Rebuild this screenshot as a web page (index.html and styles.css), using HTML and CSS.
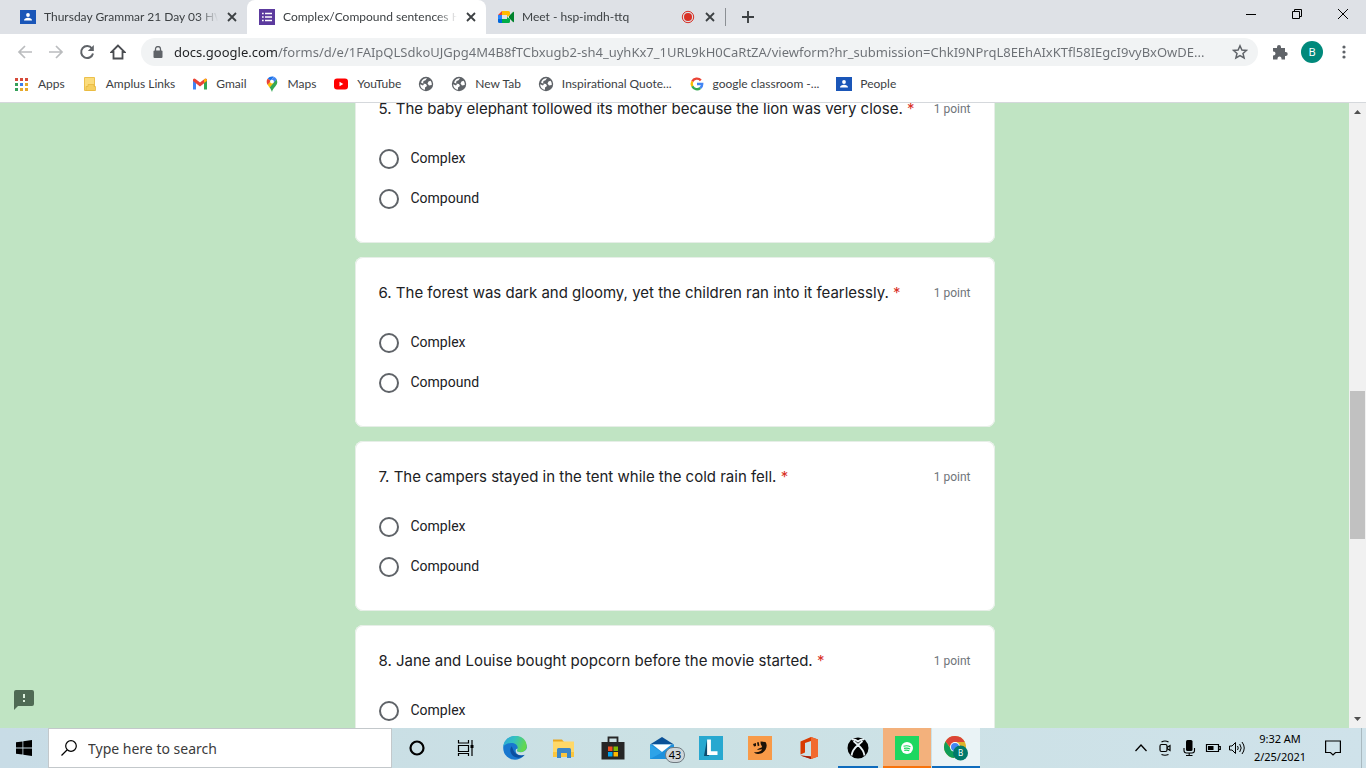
FILE: index.html
```
<!DOCTYPE html>
<html lang="en">
<head>
    <meta charset="UTF-8">
    <meta name="viewport" content="width=device-width, initial-scale=1.0">
    <title>Complex/Compound sentences HW</title>
    <link rel="stylesheet" href="styles.css">
</head>
<body>

    <!-- Shared icons -->
    <svg class="sprite" aria-hidden="true">
        <symbol id="i-close" viewBox="0 0 10 10"><path d="M1 1l8 8M9 1L1 9" stroke="#3c4043" stroke-width="1.8"/></symbol>
        <symbol id="i-classroom" viewBox="0 0 16 16"><path fill="#1a56b8" d="M0 1h16v14H0z"/><circle cx="8" cy="6" r="1.9" fill="#fff"/><path fill="#fff" d="M4 11.500c0-3.600 8-3.600 8 0z"/></symbol>
        <symbol id="i-globe" viewBox="0 0 16 16"><circle cx="8" cy="8" r="7.200" fill="#5f6368"/><path fill="#fff" d="M9 2.200l-1.500 2L5.500 5 5 7.500l3 .5 1 2-2 1.500v2.300C4 13.500 2.200 11 2.200 8.300L5 9.500 6 8 3 6.500C4 3.500 6.500 2 9 2.200zM10.500 5.500l2-.800C13.500 6 14 7.500 13.700 9l-2.700.5-1.500-2z"/></symbol>
    </svg>

    <!-- Tab strip -->
    <header class="tab-strip">
        <div class="tab">
            <svg class="icon" viewBox="0 0 16 16"><use href="#i-classroom"/></svg>
            <span class="tab-title">Thursday Grammar 21 Day 03 HW</span>
            <button class="tab-close" aria-label="Close tab"><svg viewBox="0 0 10 10"><use href="#i-close"/></svg></button>
        </div>
        <div class="tab active">
            <svg class="icon" viewBox="0 0 16 16"><path fill="#5c3a9e" d="M0 0h16v16H0z"/><path stroke="#fff" stroke-width="1.700" d="M3 4.500h1.700M6 4.500h7M3 8h1.700M6 8h7M3 11.500h1.700M6 11.500h7"/></svg>
            <span class="tab-title">Complex/Compound sentences H</span>
            <button class="tab-close" aria-label="Close tab"><svg viewBox="0 0 10 10"><use href="#i-close"/></svg></button>
        </div>
        <div class="tab">
            <svg class="icon" viewBox="0 0 16 16"><path fill="#00832d" d="M11 7l4-4c.6-.4 1 0 1 .5v9c0 .6-.5.900-1 .5l-4-4z"/><path fill="#0066da" d="M0 10h4v4H1.500Q0 14 0 12.500z"/><path fill="#e94235" d="M0 6l4-4v4z"/><path fill="#2684fc" d="M0 6h4v4H0z"/><path fill="#00ac47" d="M4 10h5V8l3 2v2.500q0 1.500-1.500 1.500H4z"/><path fill="#ffba00" d="M4 2h6.500Q12 2 12 3.500V6L9 8V6H4z"/></svg>
            <span class="tab-title">Meet - hsp-imdh-ttq</span>
            <svg class="icon" viewBox="0 0 16 16"><circle cx="8" cy="8" r="5.700" fill="none" stroke="#d93025"/><circle cx="8" cy="8" r="4" fill="#d93025"/></svg>
            <button class="tab-close" aria-label="Close tab"><svg viewBox="0 0 10 10"><use href="#i-close"/></svg></button>
        </div>
        <button class="new-tab" aria-label="New tab"><svg viewBox="0 0 12 12"><path d="M6 0v12M0 6h12" stroke="#3c4043" stroke-width="1.900"/></svg></button>
        <div class="window-controls">
            <button aria-label="Minimize"><svg viewBox="0 0 10 10"><path d="M0 5.500h10" stroke="#000"/></svg></button>
            <button aria-label="Restore"><svg viewBox="0 0 10 10"><path d="M.5 2.500h7v7h-7zM2.500 2.500v-2h7v7h-2" fill="none" stroke="#000"/></svg></button>
            <button aria-label="Close window"><svg viewBox="0 0 10 10"><path d="M0 0l10 10M10 0L0 10" stroke="#000"/></svg></button>
        </div>
    </header>

    <!-- Address bar -->
    <div class="toolbar">
        <div class="nav">
            <button aria-label="Back"><svg viewBox="0 0 16 16"><path d="M15 8H2M8 2L2 8l6 6" fill="none" stroke="#babcbe" stroke-width="1.700"/></svg></button>
            <button aria-label="Forward"><svg viewBox="0 0 16 16"><path d="M1 8h13M8 2l6 6-6 6" fill="none" stroke="#babcbe" stroke-width="1.700"/></svg></button>
            <button aria-label="Reload"><svg viewBox="0 0 16 16"><path d="M13 4.500A6 6 0 1 0 14 9.500" fill="none" stroke="#5f6368" stroke-width="2"/><path d="M14.800 1v6h-6z" fill="#5f6368"/></svg></button>
            <button aria-label="Home"><svg viewBox="0 0 16 16"><path d="M8 1.500L1.500 8h2v6.500h9V8h2z" fill="none" stroke="#4a4d51" stroke-width="1.800"/></svg></button>
        </div>
        <div class="omnibox">
            <svg class="lock" viewBox="0 0 10 12"><path d="M2.500 5V3a2.500 2.500 0 0 1 5 0v2" fill="none" stroke="#5f6368" stroke-width="1.300"/><rect x=".5" y="4.500" width="9" height="7.500" rx="1" fill="#5f6368"/></svg>
            <input class="url" type="text" aria-label="Address" value="docs.google.com/forms/d/e/1FAIpQLSdkoUJGpg4M4B8fTCbxugb2-sh4_uyhKx7_1URL9kH0CaRtZA/viewform?hr_submission=ChkI9NPrqL8EEhAIxKTfl58IEgcI9vyBxOwDE...">
            <button class="star" aria-label="Bookmark this page"><svg viewBox="0 0 16 16"><path d="M8 1.800l1.900 4.200 4.600.4-3.500 3 1.100 4.500L8 11.500l-4.100 2.400L5 9.400 1.500 6.400l4.600-.4z" fill="none" stroke="#5f6368" stroke-width="1.500"/></svg></button>
        </div>
        <div class="actions">
            <button aria-label="Extensions"><svg viewBox="0 0 16 16"><path fill="#5f6368" d="M1 4h4V3a2 2 0 0 1 4 0v1h4v4h.7a2 2 0 0 1 0 4H13v3.500H9.500V14.500a2 2 0 0 0-4 0v1H1V11.500h.5a2 2 0 0 0 0-4H1z"/></svg></button>
            <button aria-label="Profile"><span class="avatar">B</span></button>
            <button aria-label="Menu"><svg viewBox="0 0 16 16" fill="#5f6368"><circle cx="8" cy="3" r="1.600"/><circle cx="8" cy="8" r="1.600"/><circle cx="8" cy="13" r="1.600"/></svg></button>
        </div>
    </div>

    <nav class="bookmarks">
        <a href="#"><svg class="icon" viewBox="0 0 16 16"><path fill="#d64a3a" d="M1 2h3v3H1zM6 2h3v3H6zM11 2h3v3h-3z"/><path fill="#35a05a" d="M1 7h3v3H1zM1 12h3v3H1z"/><path fill="#3b7ded" d="M6 7h3v3H6z"/><path fill="#e6a92b" d="M11 7h3v3h-3zM6 12h3v3H6zM11 12h3v3h-3z"/></svg>Apps</a>
        <a href="#"><svg class="icon" viewBox="0 0 16 16"><path fill="#fbdc7c" stroke="#ecc04c" d="M2.500 1.500h10v13h-10z"/><path fill="#f6cf5f" stroke="#e8b93f" stroke-width=".8" d="M4 14.500h9.500v-4H12v-2H6v2H4z"/></svg>Amplus Links</a>
        <a href="#"><svg class="icon" viewBox="0 0 16 16"><path fill="#4285f4" d="M1 4v9.500h3V6z"/><path fill="#34a853" d="M12 6v7.500h3V4z"/><path fill="#ea4335" d="M1 5V3.500Q2 2 3.500 3L8 6.500 12.500 3Q14 2 15 3.500V5L8 10.500z"/><path fill="#fbbc04" d="M12 6.800V3.500l1-.8q2 0 2 2z"/></svg>Gmail</a>
        <a href="#"><svg class="icon" viewBox="0 0 16 16"><path fill="#34a853" d="M13.300 6c0 4-4.100 5-5.300 10-.6-2-1.500-3.500-2.500-4.800L12.500 3z"/><path fill="#fbbc04" d="M3.500 8.500l3-3.500 3.500 1.500-4.500 5z"/><path fill="#ea4335" d="M3.800 2.500l3 2.500-3.300 3.800C2.300 6.500 2.400 4 3.800 2.500z"/><path fill="#1a73e8" d="M3.800 2.500C5 .5 8 0 9.800.7L6.700 4.800z"/><path fill="#4285f4" d="M9.800.7q2 .7 2.900 2.500L9.500 7 7 4.500z"/><circle cx="8" cy="5.600" r="1.900" fill="#fff"/></svg>Maps</a>
        <a href="#"><svg class="icon" viewBox="0 0 16 16"><rect x="1" y="2.500" width="14" height="11" rx="3" fill="#f00"/><path fill="#fff" d="M6.500 5.800v4.400L10.300 8z"/></svg>YouTube</a>
        <a href="#" aria-label="Untitled bookmark"><svg class="icon" viewBox="0 0 16 16"><use href="#i-globe"/></svg></a>
        <a href="#"><svg class="icon" viewBox="0 0 16 16"><use href="#i-globe"/></svg>New Tab</a>
        <a href="#"><svg class="icon" viewBox="0 0 16 16"><use href="#i-globe"/></svg>Inspirational Quote...</a>
        <a href="#"><svg class="icon" viewBox="0 0 16 16" fill="none" stroke-width="2.400"><path stroke="#ea4335" d="M3.200 5.500A5.200 5.200 0 0 1 11.800 4.400"/><path stroke="#fbbc05" d="M3.300 10.300a5.200 5.200 0 0 1 0-4.800"/><path stroke="#34a853" d="M11.300 12a5.200 5.200 0 0 1-8-1.700"/><path stroke="#4285f4" d="M8 8h5.200a5 5 0 0 1-1.900 4"/></svg>google classroom -...</a>
        <a href="#"><svg class="icon" viewBox="0 0 16 16"><use href="#i-classroom"/></svg>People</a>
    </nav>

    <!-- Form page -->
    <main class="page">
        <div class="page-content">
            <form class="questions">
                <fieldset class="card">
                    <div class="question">
                        <h2>5. The baby elephant followed its mother because the lion was very close. <span class="required">*</span></h2>
                        <span class="points">1 point</span>
                    </div>
                    <label class="option"><input type="radio" name="q5"><span>Complex</span></label>
                    <label class="option"><input type="radio" name="q5"><span>Compound</span></label>
                </fieldset>
                <fieldset class="card">
                    <div class="question">
                        <h2>6. The forest was dark and gloomy, yet the children ran into it fearlessly. <span class="required">*</span></h2>
                        <span class="points">1 point</span>
                    </div>
                    <label class="option"><input type="radio" name="q6"><span>Complex</span></label>
                    <label class="option"><input type="radio" name="q6"><span>Compound</span></label>
                </fieldset>
                <fieldset class="card">
                    <div class="question">
                        <h2>7. The campers stayed in the tent while the cold rain fell. <span class="required">*</span></h2>
                        <span class="points">1 point</span>
                    </div>
                    <label class="option"><input type="radio" name="q7"><span>Complex</span></label>
                    <label class="option"><input type="radio" name="q7"><span>Compound</span></label>
                </fieldset>
                <fieldset class="card">
                    <div class="question">
                        <h2>8. Jane and Louise bought popcorn before the movie started. <span class="required">*</span></h2>
                        <span class="points">1 point</span>
                    </div>
                    <label class="option"><input type="radio" name="q8"><span>Complex</span></label>
                </fieldset>
            </form>
            <button class="feedback" aria-label="Report a problem"><svg viewBox="0 0 20 20"><path fill="#4f6a54" d="M2 0h16q2 0 2 2v12q0 2-2 2H4l-4 4V2q0-2 2-2z"/><path fill="#dcefdc" d="M9 4h2v4H9zM9 10h2v2H9z"/></svg></button>
        </div>
        <div class="scrollbar">
            <svg viewBox="0 0 17 17"><path fill="#505050" d="M5 11l3.500-4 3.500 4z"/></svg>
            <div class="scroll-track"><div class="scroll-thumb"></div></div>
            <svg viewBox="0 0 17 17"><path fill="#505050" d="M5 6l3.500 4L12 6z"/></svg>
        </div>
    </main>

    <!-- Taskbar -->
    <footer class="taskbar">
        <button class="start" aria-label="Start"><svg viewBox="0 0 16 16"><path d="M0 2.300L6.500 1.400v6.200H0zM7.300 1.300L16 0v7.600H7.300zM0 8.400h6.500v6.200L0 13.700zM7.300 8.400H16V16l-8.700-1.300z"/></svg></button>
        <div class="search">
            <svg viewBox="0 0 16 16"><circle cx="10" cy="6" r="5.300" fill="none" stroke="#000" stroke-width="1.200"/><path d="M6 10L.5 15.500" stroke="#000" stroke-width="1.300"/></svg>
            <input type="text" aria-label="Search" placeholder="Type here to search">
        </div>
        <div class="apps">
            <button aria-label="Cortana"><svg viewBox="0 0 24 24"><circle cx="12" cy="12" r="6.500" fill="none" stroke="#000" stroke-width="2.200"/></svg></button>
            <button aria-label="Task view"><svg viewBox="0 0 24 24" fill="none" stroke="#000" stroke-width="1.200"><path d="M4.500 4v3h10V4M4.500 9.500h10v6h-10zM4.500 20v-2.500h10V20M18 4v16"/><path d="M16.500 9h3v3h-3z" fill="#000" stroke="none"/></svg></button>
            <button aria-label="Edge"><svg viewBox="0 0 24 24"><defs><linearGradient id="edge-top" x1="0" y1="0" x2="1" y2=".3"><stop offset="0" stop-color="#2aa5dc"/><stop offset=".5" stop-color="#35c1c0"/><stop offset="1" stop-color="#62d84e"/></linearGradient></defs><circle cx="12" cy="12" r="11.800" fill="#1877cf"/><path fill="url(#edge-top)" d="M.3 11C1-3.500 23-4 23.800 10c.3 5-5 7.500-9.500 5.500-1.500-.8-.3-1.500.2-2.800C15.500 9.500 12 6.800 8 7 4 7.200 1.200 9 .3 11z"/><path fill="#cbe1e4" d="M14.300 15.500c4 1.800 8.500.2 9.700-3.500v6l-3.500 1.200c-3 1-7-.2-7.700-3.400-.4-2 .2-2.800 1.700-3.200.2 1-1.200 2-.2 2.900z"/><path fill="#0c4fa0" d="M8.700 10.300c-3.700 4.200.3 11.700 6.800 11.400 2.500-.2 4.500-1.200 6-2.700-3.500 1-7.500.5-9.800-2.500-1.500-2-2-4.200-3-6.200z"/></svg></button>
            <button aria-label="File Explorer"><svg viewBox="0 0 24 24"><path fill="#e9a720" d="M1 3.500h9l2 2.500H1z"/><path fill="#ffd867" d="M1 5.500h21V21H1z"/><path fill="#fbc63d" d="M1 16h21v5H1z"/><path fill="#3c86c6" d="M5 13.500q0-1.500 1.500-1.500h11q1.500 0 1.500 1.500V22h-4v-5H9v5H5z"/></svg></button>
            <button aria-label="Microsoft Store"><svg viewBox="0 0 24 24"><path fill="none" stroke="#262626" stroke-width="1.800" d="M7.500 7V1.500h9V7"/><path fill="#262626" d="M.5 6h23v17.500H.5z"/><path fill="#f25022" d="M7 10.500h4.500V15H7z"/><path fill="#7fba00" d="M12.500 10.500H17V15h-4.500z"/><path fill="#00a4ef" d="M7 16h4.500v4.500H7z"/><path fill="#ffb900" d="M12.500 16H17v4.500h-4.500z"/></svg></button>
            <button class="mail" aria-label="Mail"><svg viewBox="0 0 24 24"><path fill="#0b5197" d="M0 8.500L12 1l12 7.500z"/><path fill="#1e90dc" d="M0 8.500h24V23H0z"/><path fill="#fff" d="M2.500 8.500h19L12 16z"/><path fill="#2ea3e8" d="M0 8.500l12 8L0 23z"/></svg><span class="badge">43</span></button>
            <button aria-label="Lexia"><svg viewBox="0 0 24 24"><path fill="#28a8d0" d="M0 0h24v24H0z"/><path fill="#0b4a6e" d="M8 4L5 20h5z"/><path fill="none" stroke="#fff" stroke-width="3.800" d="M10 3.500v13.700h8.500"/></svg></button>
            <button aria-label="Game"><svg viewBox="0 0 24 24"><path fill="#f89a48" d="M0 0h24v24H0z"/><path fill="#1c1208" d="M5 8l3-1v3L6 10.500zM9 6.500l1.600-.5.800 3.500-1.600.7zM12.500 5.500l5 .500c2.500 3 1 9.500-4.500 11.500-3 1-6 .5-7-1.500 4 .8 7.500-.8 8-2.800l-5 .8c.8-1.800 4-1.800 5.200-3l-1.500-3z"/></svg></button>
            <button aria-label="Office"><svg viewBox="0 0 24 24"><path fill="#d83b01" d="M14 1l7 2.500v17L14 23 3.500 19.500 14 20.500V5L8 7v9.500l-4.500 2V5.500z"/><path fill="#f26a2e" d="M14 1l7 2.500v17L14 23z"/><path fill="#a51f0a" d="M3.500 19.500L14 23v-2.500z"/></svg></button>
            <button class="running" aria-label="Xbox"><svg viewBox="0 0 24 24"><circle cx="12" cy="12" r="10.500"/><path d="M6 3.500c3-.5 6 2 6 2s3-2.500 6-2M12 9c-3.500 3-6 7-6.500 10.500M12 9c3.500 3 6 7 6.500 10.500M12 9L7.500 5M12 9l4.500-4" fill="none" stroke="#e9f2f5" stroke-width="1.800"/></svg></button>
            <button class="running alert" aria-label="Spotify"><svg viewBox="0 0 24 24"><path fill="#1ed760" d="M0 0h24v24H0z"/><circle cx="12" cy="12" r="6" fill="#fff"/><path d="M8.500 10.200q4-1 7 .6M9 12.400q3.500-.8 6 .5M9.300 14.400q3-.6 5 .4" fill="none" stroke="#1ed760" stroke-width="1.100"/></svg></button>
            <button class="running current" aria-label="Chrome"><svg class="chrome" viewBox="0 0 26 26"><circle cx="12" cy="12" r="11" fill="#ddb22b"/><path fill="#db4437" d="M2.500 6.500a11 11 0 0 1 19.300.5H12l-5 5z"/><path fill="#0f9d58" d="M2.500 6.500A11 11 0 0 0 11 23l4-6-7-3z"/><circle cx="12" cy="12" r="5" fill="#fff"/><circle cx="12" cy="12" r="4" fill="#4285f4"/><circle cx="17.500" cy="18" r="7.500" fill="#00796b"/><text x="17.500" y="21" class="chrome-badge">B</text></svg></button>
        </div>
        <div class="tray">
            <button aria-label="Show hidden icons"><svg viewBox="0 0 16 16"><path d="M2.500 11L8 5l5.500 6" fill="none" stroke="#000" stroke-width="1.300"/></svg></button>
            <button aria-label="Camera"><svg viewBox="0 0 16 16" fill="none" stroke="#000" stroke-width="1.200"><rect x="3" y="4.500" width="7" height="7" rx="1.500"/><path d="M10 7.500l3-2v5l-3-2M4.500 2q3.500-2 7 0M4.500 14.500q3.500 1.500 7 0"/></svg></button>
            <button aria-label="Microphone"><svg viewBox="0 0 16 16"><rect x="5" y="0" width="6.500" height="11" rx="1.500"/><path d="M3 8v2.500q0 2.500 2.500 2.500h5.500q2.500 0 2.500-2.500V8M8.200 13v2.500M5 15.500h6.500" fill="none" stroke="#000" stroke-width="1.100"/></svg></button>
            <button aria-label="Battery"><svg viewBox="0 0 16 16"><path d="M1.500 4.500h12v7h-12zM14 6.500h1.300v3H14" fill="none" stroke="#000" stroke-width="1.200"/><path d="M3 6h5.500v4H3z"/></svg></button>
            <button aria-label="Volume"><svg viewBox="0 0 16 16" fill="none" stroke="#000"><path d="M.5 6h2.500l3.500-3.500v11L3 10H.5zM8.500 6q1.500 2 0 4M10.700 4q3 4 0 8M13 2q4.500 6 0 12"/></svg></button>
            <button class="clock"><time>9:32 AM</time><time>2/25/2021</time></button>
            <button class="notifications" aria-label="Notifications"><svg viewBox="0 0 16 16"><path d="M.6 1h14.800v11.500H10.500L8 15l-2.500-2.500H.6z" fill="none" stroke="#000" stroke-width="1.200"/></svg></button>
        </div>
    </footer>

</body>
</html>
```
FILE: styles.css
```
* {
    box-sizing: border-box;
}

body {
    margin: 0;
    height: 100vh;
    display: flex;
    flex-direction: column;
    overflow: hidden;
    font-family: 'Noto Sans', sans-serif;
    font-size: 11px;
    color: #3c4043;
    background-color: #fff;
}

button {
    display: flex;
    align-items: center;
    justify-content: center;
    padding: 0;
    border: none;
    background: none;
    font: inherit;
    color: inherit;
}

input {
    font: inherit;
    color: inherit;
}

svg {
    display: block;
    flex-shrink: 0;
}

.sprite {
    position: absolute;
    width: 0;
    height: 0;
}

.icon {
    width: 16px;
    height: 16px;
}

/* Tab strip */
.tab-strip {
    display: flex;
    height: 34px;
    padding-left: 8px;
    background-color: #dee1e6;
}

.tab {
    display: flex;
    align-items: center;
    width: 239px;
    padding: 0 9px 0 12px;
    gap: 8px;
}

.tab.active {
    background-color: #fff;
    border-radius: 8px 8px 0 0;
}

.tab-title {
    flex: 1;
    overflow: hidden;
    white-space: nowrap;
    font-family: Lato, sans-serif;
    font-size: 12px;
    line-height: 18px;
    mask-image: linear-gradient(to left, transparent, #000 20px);
}

.tab-close svg {
    width: 10px;
    height: 10px;
}

.tab-close {
    width: 12px;
}

.new-tab {
    width: 44px;
    height: 18px;
    margin-top: 8px;
    border-left: 1px solid #8b8f94;
}

.new-tab svg {
    width: 12px;
    height: 12px;
}

.window-controls {
    display: flex;
    height: 28px;
    margin-left: auto;
}

.window-controls button {
    width: 46px;
}

.window-controls svg {
    width: 10px;
    height: 10px;
}

/* Address bar */
.toolbar {
    display: flex;
    align-items: center;
    height: 36px;
    padding: 0 6px 0 9px;
}

.nav,
.actions {
    display: flex;
}

.nav button {
    width: 31px;
}

.actions button {
    width: 32px;
}

.toolbar svg {
    width: 16px;
    height: 16px;
}

.omnibox {
    display: flex;
    align-items: center;
    flex: 1;
    height: 28px;
    margin: 0 6px 0 8px;
    padding: 0 10px 0 12px;
    border-radius: 14px;
    background-color: #f1f3f4;
}

.omnibox .lock {
    width: 10px;
    height: 12px;
    margin-right: 11px;
}

.url {
    flex: 1;
    min-width: 0;
    padding: 0;
    border: none;
    font-size: 13px;
    /* host is darker than the rest of the address */
    background: linear-gradient(to right, #202124 104px, #6b6f74 104px);
    background-clip: text;
    color: transparent;
}

.avatar {
    width: 22px;
    height: 22px;
    border-radius: 50%;
    background-color: #00897b;
    color: #fff;
    font-size: 11px;
    line-height: 22px;
    text-align: center;
}

/* Bookmarks */
.bookmarks {
    display: flex;
    align-items: center;
    gap: 17px;
    height: 33px;
    padding: 0 14px 5px;
    border-bottom: 1px solid #d5d8dc;
    font-family: Lato, sans-serif;
    font-size: 12px;
}

.bookmarks a {
    display: flex;
    align-items: center;
    gap: 8px;
    color: #3c4043;
    text-decoration: none;
    white-space: nowrap;
}

/* Form page */
.page {
    flex: 1;
    display: flex;
    min-height: 0;
}

.page-content {
    position: relative;
    flex: 1;
    overflow: hidden;
    background-color: #c0e4c3;
}

.questions {
    display: flex;
    flex-direction: column;
    gap: 14px;
    max-width: 640px;
    margin: -30px auto 0;
}

.card {
    margin: 0;
    padding: 24px;
    border: none;
    border-radius: 8px;
    background-color: #fff;
    box-shadow: inset 0 0 0 1px #e6eee7;
    font-family: Roboto, sans-serif;
    color: #202124;
}

.question {
    display: flex;
    align-items: center;
    justify-content: space-between;
    margin-bottom: 18px;
}

.question h2 {
    margin: 0;
    font-family: Inter, sans-serif;
    font-size: 15px;
    font-weight: 400;
    line-height: 24px;
    white-space: nowrap;
}

.required {
    color: #d93025;
}

.points {
    font-size: 12px;
    color: #70757a;
}

.option {
    display: flex;
    align-items: center;
    gap: 12px;
    height: 40px;
    font-size: 14px;
}

.option span {
    padding-bottom: 2px;
}

.option input {
    appearance: none;
    width: 20px;
    height: 20px;
    margin: 0;
    border: 2px solid #5f6368;
    border-radius: 50%;
}

.option input:checked {
    border-color: #4caf50;
    background: radial-gradient(#4caf50 5px, transparent 5px);
}

.feedback {
    position: absolute;
    left: 14px;
    bottom: 18px;
}

.feedback svg {
    width: 20px;
    height: 20px;
}

.scrollbar {
    display: flex;
    flex-direction: column;
    width: 17px;
    background-color: #f1f1f1;
}

.scrollbar svg {
    width: 17px;
    height: 17px;
}

.scroll-track {
    flex: 1;
    padding: 0 1px;
}

.scroll-thumb {
    height: 25%;
    margin-top: 271px;
    background-color: #c1c1c1;
}

/* Taskbar */
.taskbar {
    display: flex;
    height: 40px;
    background: linear-gradient(to right, #c8dce6, #cbe1e4 50%, #cfe2ea);
    color: #000;
}

.start {
    width: 48px;
}

.start svg,
.search svg {
    width: 16px;
    height: 16px;
}

.search {
    display: flex;
    align-items: center;
    gap: 11px;
    width: 344px;
    padding: 0 12px;
    border: 1px solid #c3c8cb;
    background-color: #fff;
}

.search input {
    flex: 1;
    min-width: 0;
    padding: 0;
    border: none;
    font-size: 14px;
}

.search input::placeholder {
    color: #3b3b3b;
}

.apps {
    display: flex;
    gap: 1px;
    padding-left: 1px;
}

.apps button {
    width: 48px;
}

.apps svg {
    width: 24px;
    height: 24px;
}

.apps .chrome {
    width: 26px;
    height: 26px;
}

.running {
    background: linear-gradient(#0f6cbd, #0f6cbd) bottom / 40px 2px no-repeat;
}

.running.alert {
    border-bottom: 2px solid #f7730c;
    padding-top: 2px;
    background: #f3b17c;
}

.running.current {
    border-bottom: 2px solid #0f6cbd;
    padding-top: 2px;
    background: #eaf3f6;
}

.mail {
    position: relative;
}

.badge {
    position: absolute;
    right: 1px;
    bottom: 5px;
    width: 20px;
    border: 1px solid #6f7a80;
    border-radius: 8px;
    background-color: #cfd6da;
    font-size: 11px;
    line-height: 14px;
}

.chrome-badge {
    fill: #fff;
    font-size: 8px;
    text-anchor: middle;
}

.tray {
    display: flex;
    margin-left: auto;
    margin-right: 4px;
    padding-right: 6px;
    border-right: 1px solid #a9b9c0;
}

.tray button {
    width: 24px;
}

.tray svg {
    width: 16px;
    height: 16px;
}

.tray .clock {
    flex-direction: column;
    width: 62px;
    line-height: 18px;
}

.tray .notifications {
    width: 44px;
}
```
